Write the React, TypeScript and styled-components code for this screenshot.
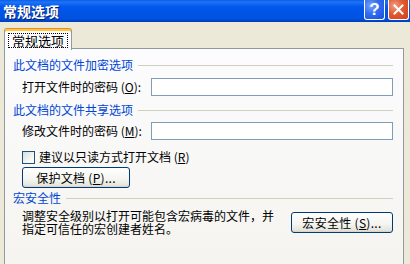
import React from 'react';
import styled, { createGlobalStyle } from 'styled-components';

const GlobalStyle = createGlobalStyle`
  html, body {
    margin: 0;
    padding: 0;
    background: #ece9d8;
  }
  * {
    box-sizing: border-box;
  }
`;

const Window = styled.div`
  width: 410px;
  height: 264px;
  overflow: hidden;
  display: flex;
  flex-direction: column;
  background: #ece9d8;
  font-family: 'Noto Sans CJK SC', 'Liberation Sans', sans-serif;
  font-size: 12px;
  color: #000;
`;

const TitleBar = styled.div`
  height: 22px;
  flex-shrink: 0;
  display: flex;
  align-items: center;
  justify-content: space-between;
  padding: 0 1px 0 3px;
  background: linear-gradient(
    180deg,
    #0a5fe6 0%,
    #1f73f5 10%,
    #0058ee 30%,
    #0054e3 60%,
    #0053e0 85%,
    #0043c8 95%,
    #003bb8 100%
  );
`;

const TitleText = styled.div`
  color: #fff;
  font-weight: 700;
  font-size: 14px;
  line-height: 16px;
  text-shadow: 1px 1px #0a1e6e;
`;

const TitleButtons = styled.div`
  display: flex;
  align-self: flex-start;
  gap: 3px;
`;

const CaptionButton = styled.div<{ $kind: 'help' | 'close' }>`
  width: 21px;
  height: 20px;
  border: 1px solid #fff;
  border-top: none;
  border-radius: 0 0 3px 3px;
  display: flex;
  align-items: center;
  justify-content: center;
  background: ${({ $kind }) =>
    $kind === 'close'
      ? 'radial-gradient(circle at 30% 30%, #f0a08a 0%, #e5582f 45%, #c8401b 100%)'
      : 'radial-gradient(circle at 30% 30%, #7aa2f6 0%, #2f6cf0 45%, #1a4fd8 100%)'};
  color: #fff;
  font-family: 'Liberation Sans', sans-serif;
  font-weight: 700;
  font-size: 17px;
  line-height: 1;
`;

const Body = styled.div`
  flex: 1;
  display: flex;
  flex-direction: column;
  padding: 6px 6px 0 4px;
`;

const TabStrip = styled.div`
  display: flex;
  height: 21px;
  position: relative;
  z-index: 1;
  margin-bottom: -1px;
`;

const Tab = styled.div`
  width: 68px;
  height: 22px;
  background: #fcfcfe;
  border: 1px solid #919b9c;
  border-bottom: none;
  border-top: 1px solid #e68b2c;
  border-radius: 3px 3px 0 0;
  box-shadow: inset 0 2px 0 #ffc73c;
  display: flex;
  align-items: center;
  justify-content: center;
  padding-top: 2px;
`;

const TabLabel = styled.span`
  border: 1px dotted #000;
  padding: 0 3px;
  font-size: 13px;
  line-height: 13px;
  height: 15px;
`;

const Panel = styled.div`
  flex: 1;
  width: 400px;
  min-height: 240px;
  border: 1px solid #919b9c;
  background: linear-gradient(180deg, #fcfcfe 0%, #f4f3ee 100%);
  display: flex;
  flex-direction: column;
  padding: 9px 10px 0 8px;
`;

const GroupHeader = styled.div<{ $gap: number }>`
  display: flex;
  align-items: center;
  height: 14px;
  margin-top: ${({ $gap }) => $gap}px;
  color: #0046d5;
  line-height: 14px;
  gap: 5px;

  &::after {
    content: '';
    flex: 1;
    height: 1px;
    background: #d0d0bf;
  }
`;

const FieldRow = styled.div<{ $gap: number }>`
  display: flex;
  align-items: center;
  margin-top: ${({ $gap }) => $gap}px;
  padding-left: 9px;
`;

const FieldLabel = styled.label`
  width: 129px;
  flex-shrink: 0;
  line-height: 14px;
`;

const TextInput = styled.div`
  width: 243px;
  height: 18px;
  border: 1px solid #7f9db9;
  background: #fff;
`;

const Key = styled.u`
  text-underline-offset: 1px;
`;

const CheckRow = styled.div`
  display: flex;
  align-items: center;
  gap: 4px;
  margin-top: 10px;
  padding-left: 9px;
  line-height: 14px;
`;

const CheckBox = styled.div`
  width: 13px;
  height: 13px;
  border: 1px solid #1c5180;
  background: linear-gradient(135deg, #dcdcd7 0%, #f8f8f6 70%, #fff 100%);
`;

const XpButton = styled.div<{ $width: number }>`
  width: ${({ $width }) => $width}px;
  height: 21px;
  border: 1px solid #003c74;
  border-radius: 3px;
  background: linear-gradient(180deg, #fff 0%, #f4f4f0 60%, #e6e5dd 90%, #d6d0c5 100%);
  display: flex;
  align-items: center;
  justify-content: center;
  line-height: 14px;
  letter-spacing: 0.3px;
`;

const ButtonRow = styled.div`
  margin-top: 3px;
  padding-left: 9px;
`;

const MacroRow = styled.div`
  display: flex;
  justify-content: space-between;
  align-items: flex-start;
  padding-left: 9px;
  margin-top: 3px;
`;

const Description = styled.p`
  margin: 0;
  width: 262px;
  line-height: 13px;
  padding-top: 1px;
`;

const MacroButton = styled(XpButton)`
  margin-top: 4px;
`;

export default function App() {
  return (
    <>
      <GlobalStyle />
      <Window>
        <TitleBar>
          <TitleText>常规选项</TitleText>
          <TitleButtons>
            <CaptionButton $kind="help">?</CaptionButton>
            <CaptionButton $kind="close">
              <svg width="11" height="11" viewBox="0 0 11 11">
                <path d="M1.5 1.5 L9.5 9.5 M9.5 1.5 L1.5 9.5" stroke="#fff" strokeWidth="2" strokeLinecap="square" />
              </svg>
            </CaptionButton>
          </TitleButtons>
        </TitleBar>
        <Body>
          <TabStrip>
            <Tab>
              <TabLabel>常规选项</TabLabel>
            </Tab>
          </TabStrip>
          <Panel>
            <GroupHeader $gap={0}>此文档的文件加密选项</GroupHeader>
            <FieldRow $gap={6}>
              <FieldLabel>打开文件时的密码 (<Key>O</Key>):</FieldLabel>
              <TextInput />
            </FieldRow>
            <GroupHeader $gap={7}>此文档的文件共享选项</GroupHeader>
            <FieldRow $gap={5}>
              <FieldLabel>修改文件时的密码 (<Key>M</Key>):</FieldLabel>
              <TextInput />
            </FieldRow>
            <CheckRow>
              <CheckBox />
              <span>建议以只读方式打开文档 (<Key>R</Key>)</span>
            </CheckRow>
            <ButtonRow>
              <XpButton $width={108}>保护文档 (<Key>P</Key>)...</XpButton>
            </ButtonRow>
            <GroupHeader $gap={3}>宏安全性</GroupHeader>
            <MacroRow>
              <Description>
                调整安全级别以打开可能包含宏病毒的文件，并
                <br />
                指定可信任的宏创建者姓名。
              </Description>
              <MacroButton $width={102}>宏安全性 (<Key>S</Key>)...</MacroButton>
            </MacroRow>
          </Panel>
        </Body>
      </Window>
    </>
  );
}
